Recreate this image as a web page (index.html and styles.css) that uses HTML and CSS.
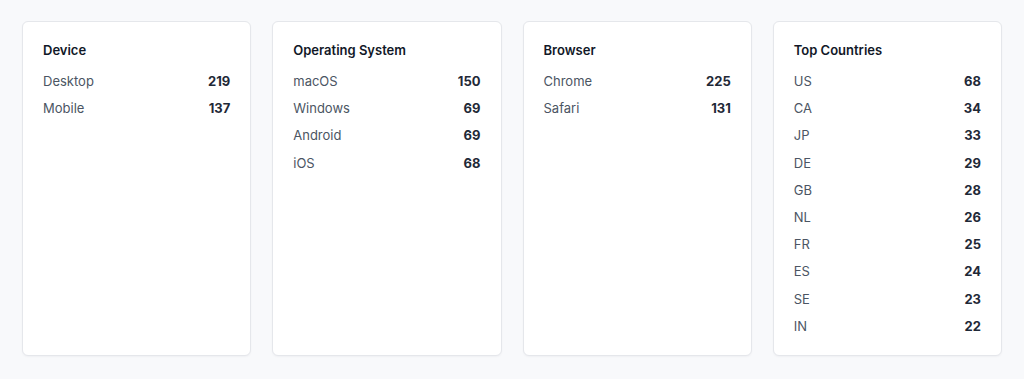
FILE: index.html
```html
<!DOCTYPE html>
<html lang="en">
<head>
<meta charset="utf-8">
<link rel="stylesheet" href="styles.css">
<title>Stats</title>
</head>
<body>
<main class="grid">
  <section class="card">
    <h2 class="card-title">Device</h2>
    <ul class="rows">
      <li class="row"><span class="label">Desktop</span><span class="value">219</span></li>
      <li class="row"><span class="label">Mobile</span><span class="value">137</span></li>
    </ul>
  </section>
  <section class="card">
    <h2 class="card-title">Operating System</h2>
    <ul class="rows">
      <li class="row"><span class="label">macOS</span><span class="value">150</span></li>
      <li class="row"><span class="label">Windows</span><span class="value">69</span></li>
      <li class="row"><span class="label">Android</span><span class="value">69</span></li>
      <li class="row"><span class="label">iOS</span><span class="value">68</span></li>
    </ul>
  </section>
  <section class="card">
    <h2 class="card-title">Browser</h2>
    <ul class="rows">
      <li class="row"><span class="label">Chrome</span><span class="value">225</span></li>
      <li class="row"><span class="label">Safari</span><span class="value">131</span></li>
    </ul>
  </section>
  <section class="card">
    <h2 class="card-title">Top Countries</h2>
    <ul class="rows">
      <li class="row"><span class="label">US</span><span class="value">68</span></li>
      <li class="row"><span class="label">CA</span><span class="value">34</span></li>
      <li class="row"><span class="label">JP</span><span class="value">33</span></li>
      <li class="row"><span class="label">DE</span><span class="value">29</span></li>
      <li class="row"><span class="label">GB</span><span class="value">28</span></li>
      <li class="row"><span class="label">NL</span><span class="value">26</span></li>
      <li class="row"><span class="label">FR</span><span class="value">25</span></li>
      <li class="row"><span class="label">ES</span><span class="value">24</span></li>
      <li class="row"><span class="label">SE</span><span class="value">23</span></li>
      <li class="row"><span class="label">IN</span><span class="value">22</span></li>
    </ul>
  </section>
</main>
</body>
</html>
```
FILE: styles.css
```css
* { box-sizing: border-box; }
html, body { margin: 0; padding: 0; }
body {
  background: #f8f9fb;
  font-family: Inter, "Liberation Sans", sans-serif;
  color: #111827;
  width: 1024px;
  height: 379px;
  overflow: hidden;
}
.grid {
  display: grid;
  grid-template-columns: repeat(4, 1fr);
  column-gap: 21px;
  padding: 21px 22px 0 22px;
  align-items: stretch;
}
.card {
  background: #ffffff;
  border: 1px solid #e5e7eb;
  border-radius: 6px;
  padding: 20px 20px 19px 20px;
  box-shadow: 0 1px 2px rgba(16, 24, 40, 0.04);
}
.card-title {
  margin: 0 0 13px 0;
  font-size: 13px;
  line-height: 16px;
  font-weight: 600;
  color: #111827;
}
.rows {
  list-style: none;
  margin: 0;
  padding: 0;
  display: flex;
  flex-direction: column;
  gap: 7.2px;
}
.row {
  display: flex;
  justify-content: space-between;
  align-items: center;
  font-size: 13px;
  line-height: 20px;
}
.label { color: #4b5563; }
.value { font-weight: 700; color: #1f2937; }
```
